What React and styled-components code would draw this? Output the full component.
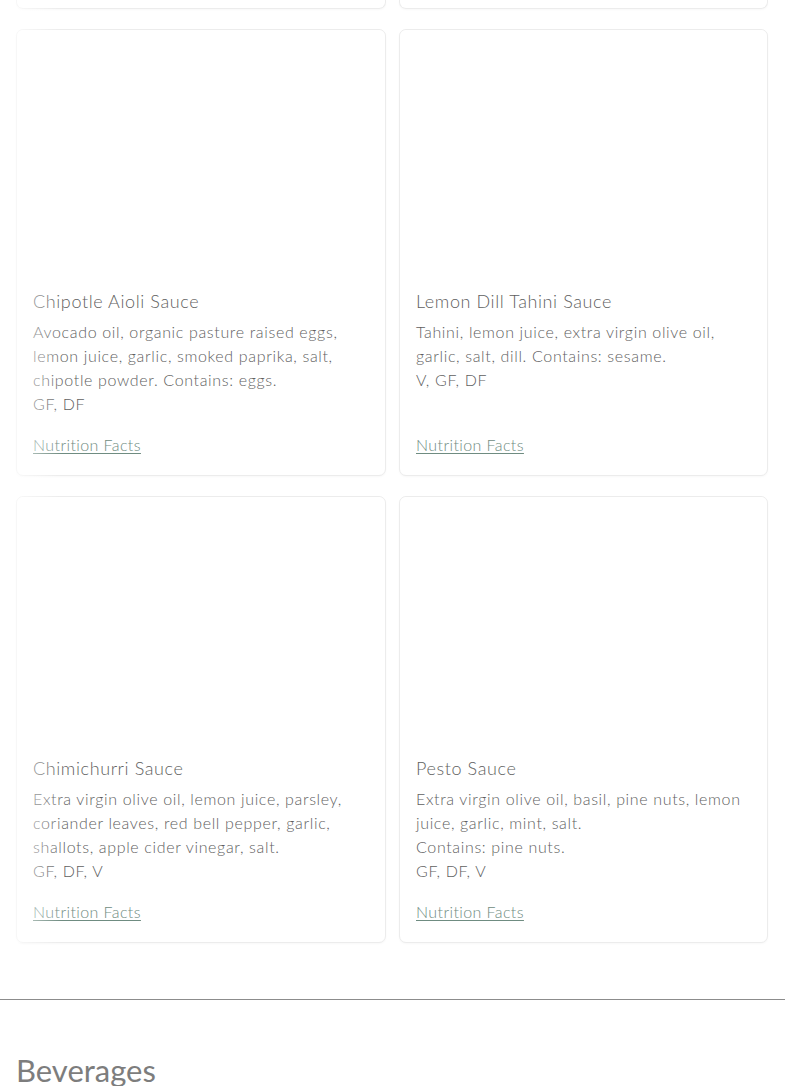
import React from "react";
import styled, { createGlobalStyle } from "styled-components";

const Global = createGlobalStyle`
  html, body { margin: 0; padding: 0; background: #fff; }
  body { font-family: "Lato", "Open Sans", sans-serif; color: #777; }
`;

const Page = styled.div`
  width: 785px;
  overflow: hidden;
`;

const Grid = styled.div`
  position: relative;
  display: grid;
  grid-template-columns: 370px 369px;
  column-gap: 13px;
  row-gap: 20px;
  padding: 0 17px 0 16px;
  &::after {
    content: "";
    position: absolute;
    left: 0;
    top: 0;
    bottom: 0;
    width: 62px;
    background: linear-gradient(to right, rgba(255,255,255,0.75) 0%, rgba(255,255,255,0.55) 35%, rgba(255,255,255,0) 100%);
    pointer-events: none;
  }
`;

const CardStub = styled.div`
  height: 8px;
  border: 1px solid #ececec;
  border-top: none;
  border-radius: 0 0 7px 7px;
  box-shadow: 0 1px 2px rgba(0,0,0,0.03);
`;

const Card = styled.div`
  display: flex;
  flex-direction: column;
  border: 1px solid #ececec;
  border-radius: 7px;
  box-shadow: 0 1px 2px rgba(0,0,0,0.03);
  background: #fff;
`;

const ImageArea = styled.div`
  height: 244px;
  background: #fff;
  border-radius: 7px 7px 0 0;
`;

const Body = styled.div`
  flex: 1;
  display: flex;
  flex-direction: column;
  padding: 16px 16px 18px 16px;
`;

const Title = styled.h3`
  margin: 0 0 8px;
  font-size: 18px;
  line-height: 22px;
  font-weight: 300;
  color: #5f5f5f;
  letter-spacing: 0.6px;
`;

const Desc = styled.p`
  margin: 0;
  font-size: 16px;
  line-height: 24px;
  font-weight: 300;
  color: #5f5f5f;
  letter-spacing: 0.65px;
`;

const Link = styled.a`
  margin-top: auto;
  padding-top: 17px;
  font-size: 16px;
  line-height: 24px;
  font-weight: 300;
  color: #6f8c81;
  text-decoration: underline;
  text-underline-offset: 2px;
  text-decoration-thickness: 1px;
  letter-spacing: 0.4px;
  align-self: flex-start;
`;

const Divider = styled.hr`
  margin: 56px 0 0;
  border: none;
  border-top: 1px solid #8c8c8c;
  height: 0;
`;

const Section = styled.h2`
  margin: 50px 0 0 16px;
  font-family: "Lato", "Open Sans", sans-serif;
  font-size: 31px;
  line-height: 40px;
  font-weight: 400;
  color: #7d7d7d;
  letter-spacing: 0;
`;

const sauces = [
  {
    name: "Chipotle Aioli Sauce",
    lines: [
      "Avocado oil, organic pasture raised eggs, lemon juice, garlic, smoked paprika, salt, chipotle powder. Contains: eggs.",
    ],
    tags: "GF, DF",
  },
  {
    name: "Lemon Dill Tahini Sauce",
    lines: ["Tahini, lemon juice, extra virgin olive oil, garlic, salt, dill. Contains: sesame."],
    tags: "V, GF, DF",
  },
  {
    name: "Chimichurri Sauce",
    lines: [
      "Extra virgin olive oil, lemon juice, parsley, coriander leaves, red bell pepper, garlic, shallots, apple cider vinegar, salt.",
    ],
    tags: "GF, DF, V",
  },
  {
    name: "Pesto Sauce",
    lines: ["Extra virgin olive oil, basil, pine nuts, lemon juice, garlic, mint, salt.", "Contains: pine nuts."],
    tags: "GF, DF, V",
  },
];

export default function App() {
  return (
    <Page>
      <Global />
      <Grid>
        <CardStub />
        <CardStub />
        {sauces.map((s) => (
          <Card key={s.name}>
            <ImageArea />
            <Body>
              <Title>{s.name}</Title>
              {s.lines.map((l) => (
                <Desc key={l}>{l}</Desc>
              ))}
              <Desc>{s.tags}</Desc>
              <Link href="#">Nutrition Facts</Link>
            </Body>
          </Card>
        ))}
      </Grid>
      <Divider />
      <Section>Beverages</Section>
    </Page>
  );
}
